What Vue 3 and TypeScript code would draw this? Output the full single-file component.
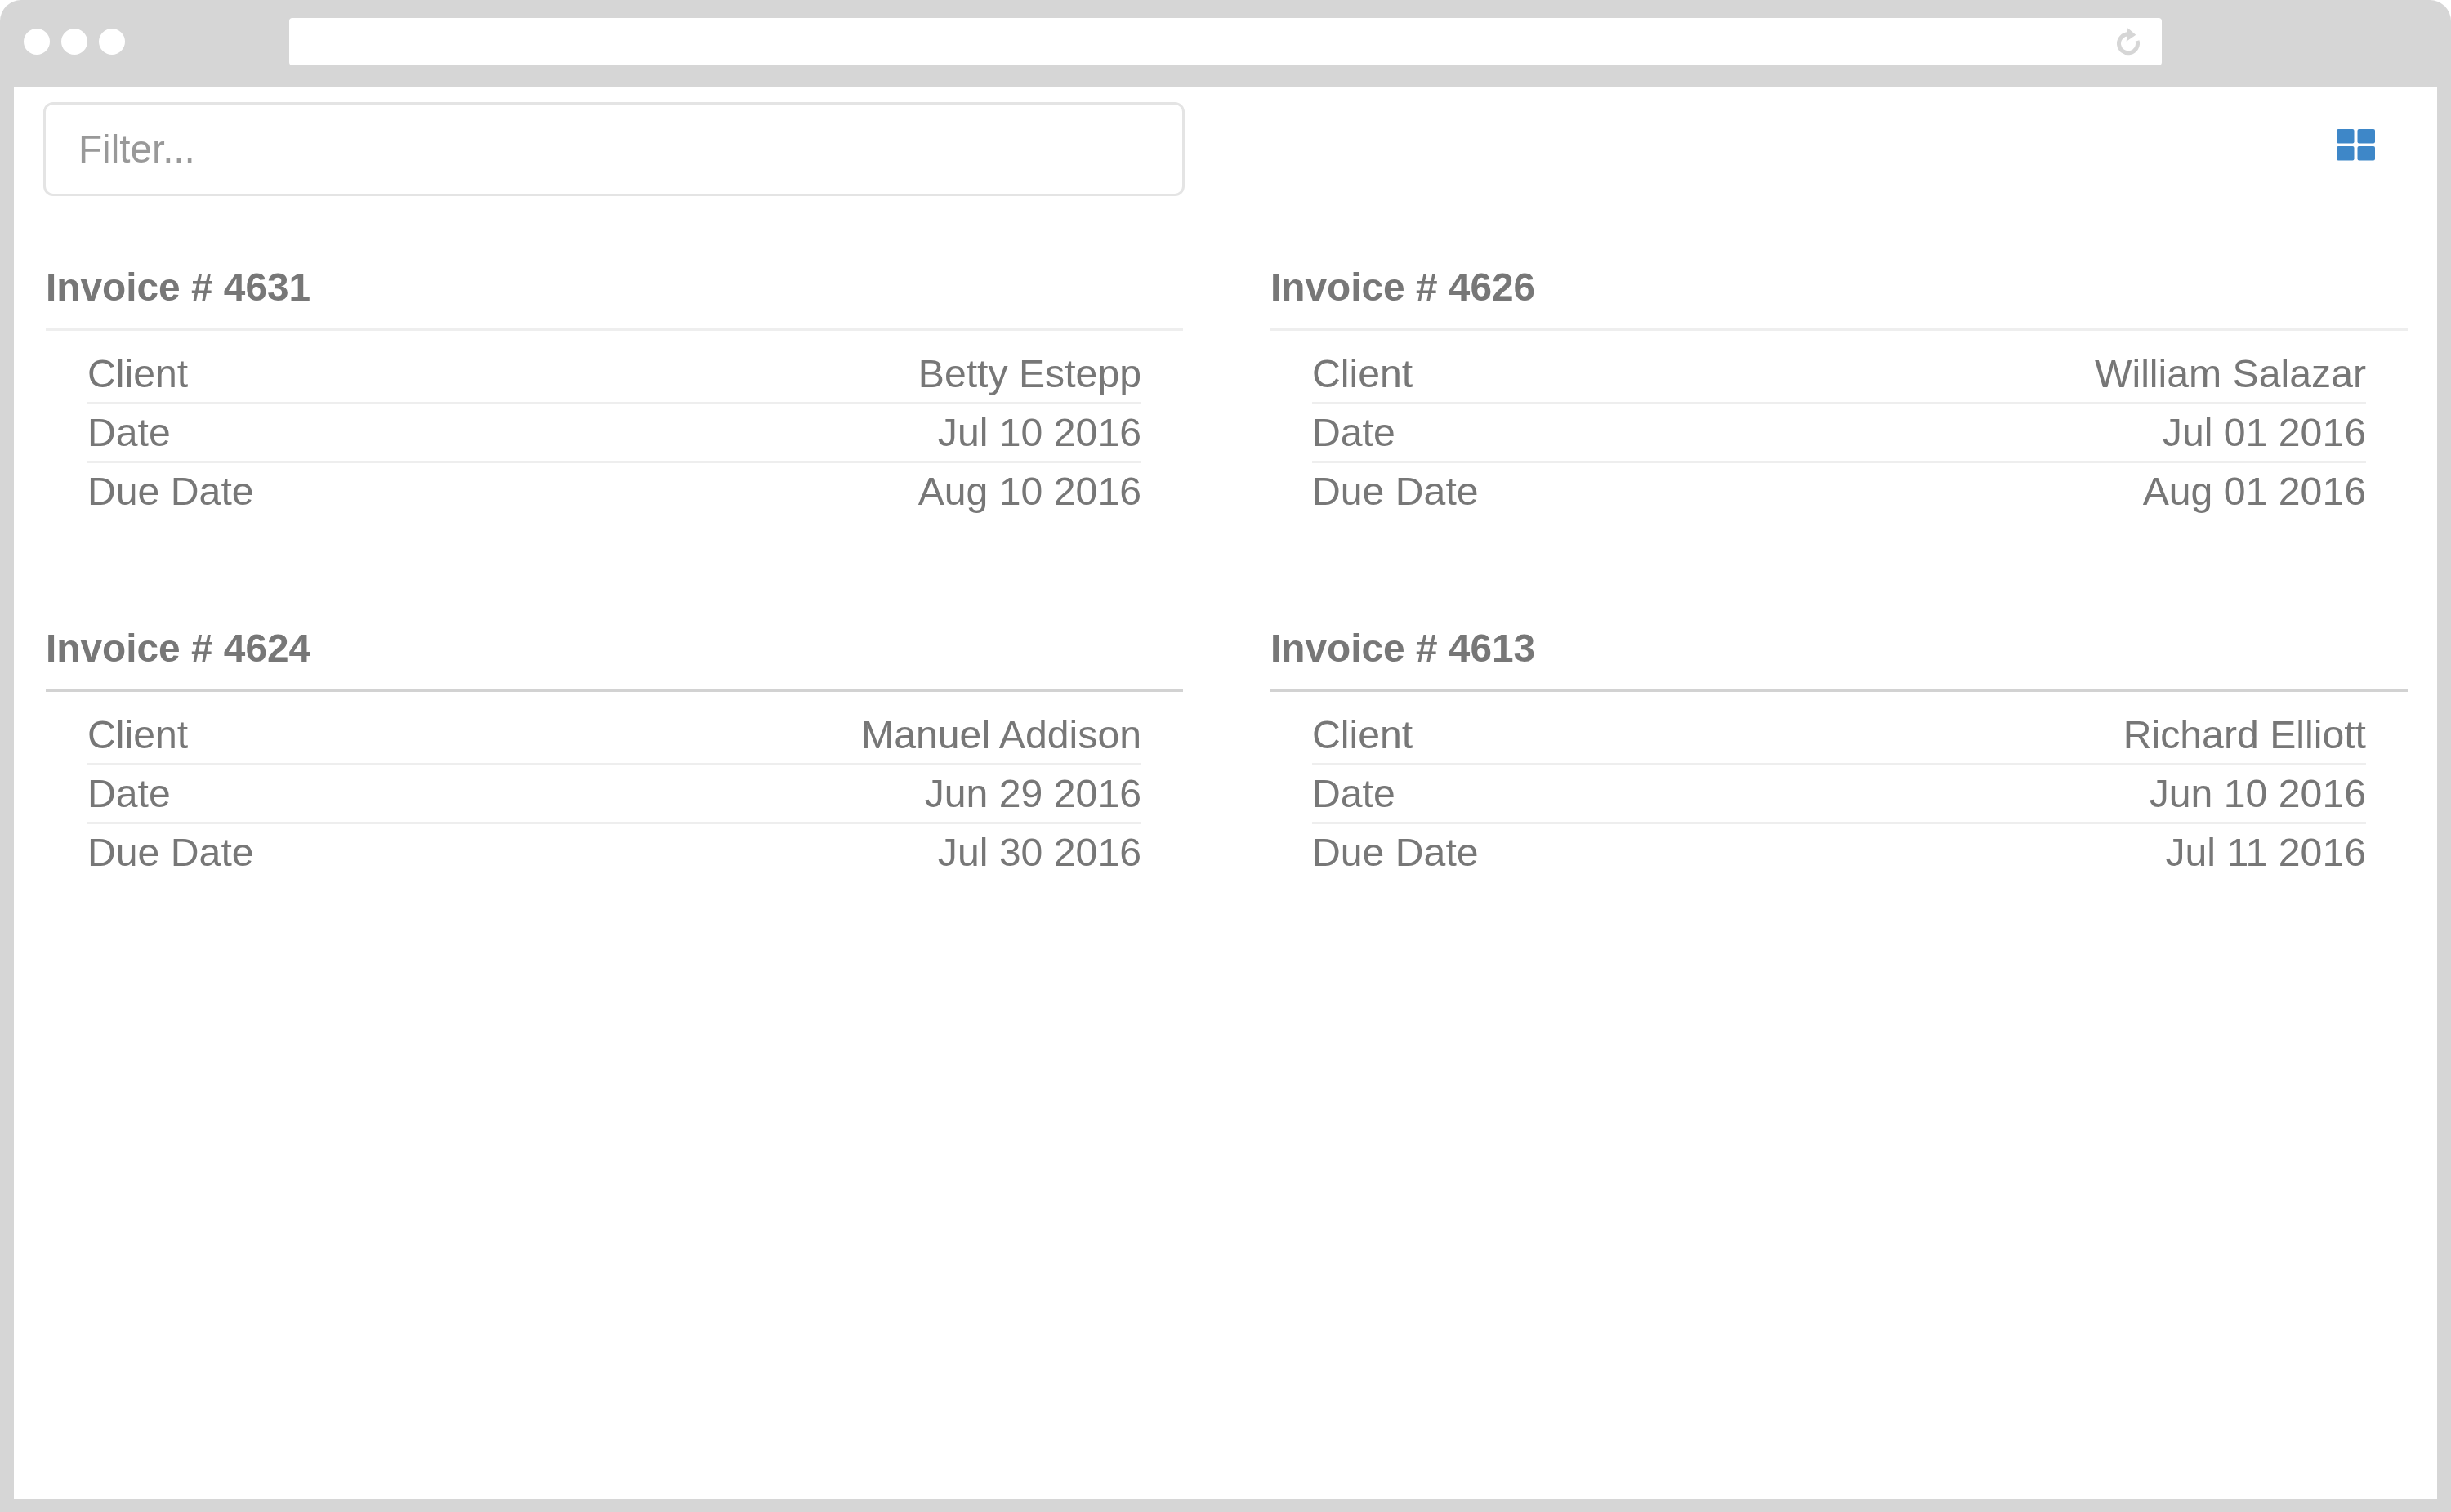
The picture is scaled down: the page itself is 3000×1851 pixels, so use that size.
<script setup lang="ts">
interface Invoice {
  id: number
  client: string
  date: string
  due: string
}

const invoices: Invoice[] = [
  { id: 4631, client: 'Betty Estepp', date: 'Jul 10 2016', due: 'Aug 10 2016' },
  { id: 4626, client: 'William Salazar', date: 'Jul 01 2016', due: 'Aug 01 2016' },
  { id: 4624, client: 'Manuel Addison', date: 'Jun 29 2016', due: 'Jul 30 2016' },
  { id: 4613, client: 'Richard Elliott', date: 'Jun 10 2016', due: 'Jul 11 2016' },
]
</script>

<template>
  <div class="frame">
    <header class="chrome">
      <div class="dots">
        <span class="dot"></span>
        <span class="dot"></span>
        <span class="dot"></span>
      </div>
      <div class="address">
        <svg class="reload" viewBox="0 0 30 36" width="30" height="36">
          <path d="M16 7.8 A11.5 11.5 0 1 0 27 16" fill="none" stroke="#d6d6d6" stroke-width="5" />
          <path d="M15.3 0.3 L25.3 8.7 L13.7 16.7 Z" fill="#d6d6d6" />
        </svg>
      </div>
    </header>
    <main class="page">
      <div class="toolbar">
        <input class="filter" type="text" placeholder="Filter..." />
        <svg class="grid-icon" viewBox="0 0 47 39" width="47" height="39">
          <rect x="0" y="0" width="21.5" height="17.5" rx="2" />
          <rect x="25.5" y="0" width="21.5" height="17.5" rx="2" />
          <rect x="0" y="21" width="21.5" height="17.5" rx="2" />
          <rect x="25.5" y="21" width="21.5" height="17.5" rx="2" />
        </svg>
      </div>
      <section class="invoices">
        <article v-for="inv in invoices" :key="inv.id" class="invoice">
          <h4 class="title">Invoice # {{ inv.id }}</h4>
          <dl class="rows">
            <div class="row"><dt>Client</dt><dd>{{ inv.client }}</dd></div>
            <div class="row"><dt>Date</dt><dd>{{ inv.date }}</dd></div>
            <div class="row"><dt>Due Date</dt><dd>{{ inv.due }}</dd></div>
          </dl>
        </article>
      </section>
    </main>
  </div>
</template>

<style>
html, body { margin: 0; background: #fff; }
</style>

<style scoped>
.frame {
  width: 3000px;
  height: 1851px;
  box-sizing: border-box;
  display: flex;
  flex-direction: column;
  padding: 0 17px 16px;
  background: #d6d6d6;
  border-radius: 26px 26px 0 0;
  font-family: "Liberation Sans", Arial, sans-serif;
  color: #777;
}
.chrome {
  height: 106px;
  flex: none;
  display: flex;
  align-items: flex-start;
}
.dots {
  display: flex;
  gap: 14px;
  margin: 35px 0 0 12px;
}
.dot {
  width: 32px;
  height: 32px;
  border-radius: 50%;
  background: #fff;
}
.address {
  width: 2292px;
  height: 58px;
  margin: 22px 0 0 201px;
  box-sizing: border-box;
  background: #fff;
  border-radius: 4px;
  display: flex;
  justify-content: flex-end;
  padding: 12px 27px 0 0;
}
.reload { display: block; }
.page {
  flex: 1;
  background: #fff;
  filter: blur(0.6px);
}
.toolbar {
  display: flex;
  justify-content: space-between;
  align-items: flex-start;
  padding: 19px 76px 0 36px;
}
.filter {
  width: 1397px;
  height: 115px;
  box-sizing: border-box;
  border: 3px solid #e4e4e4;
  border-radius: 12px;
  padding: 0 40px;
  font: 47.6px "Liberation Sans", Arial, sans-serif;
  color: #777;
  outline: none;
}
.filter::placeholder { color: #999; opacity: 1; }
.grid-icon {
  display: block;
  margin-top: 33px;
  fill: #3e87c8;
}
.invoices {
  display: grid;
  grid-template-columns: 1392px 1392px;
  column-gap: 107px;
  row-gap: 0;
  padding: 55px 0 0 39px;
}
.invoice { height: 442px; }
.invoice:nth-child(n + 3) .title { border-bottom-color: #d2d2d2; }
.title {
  margin: 0;
  height: 110px;
  box-sizing: border-box;
  padding-top: 30px;
  font-size: 47.8px;
  line-height: 54px;
  font-weight: 700;
  color: #777;
  border-bottom: 3px solid #eee;
}
.rows { margin: 0; padding: 18px 51px 0; }
.row {
  display: flex;
  justify-content: space-between;
  height: 72px;
  box-sizing: border-box;
  font-size: 48.2px;
  line-height: 68px;
  border-bottom: 3px solid #eee;
}
.row:last-child { border-bottom: none; }
dt, dd { margin: 0; font-weight: 400; }
</style>
